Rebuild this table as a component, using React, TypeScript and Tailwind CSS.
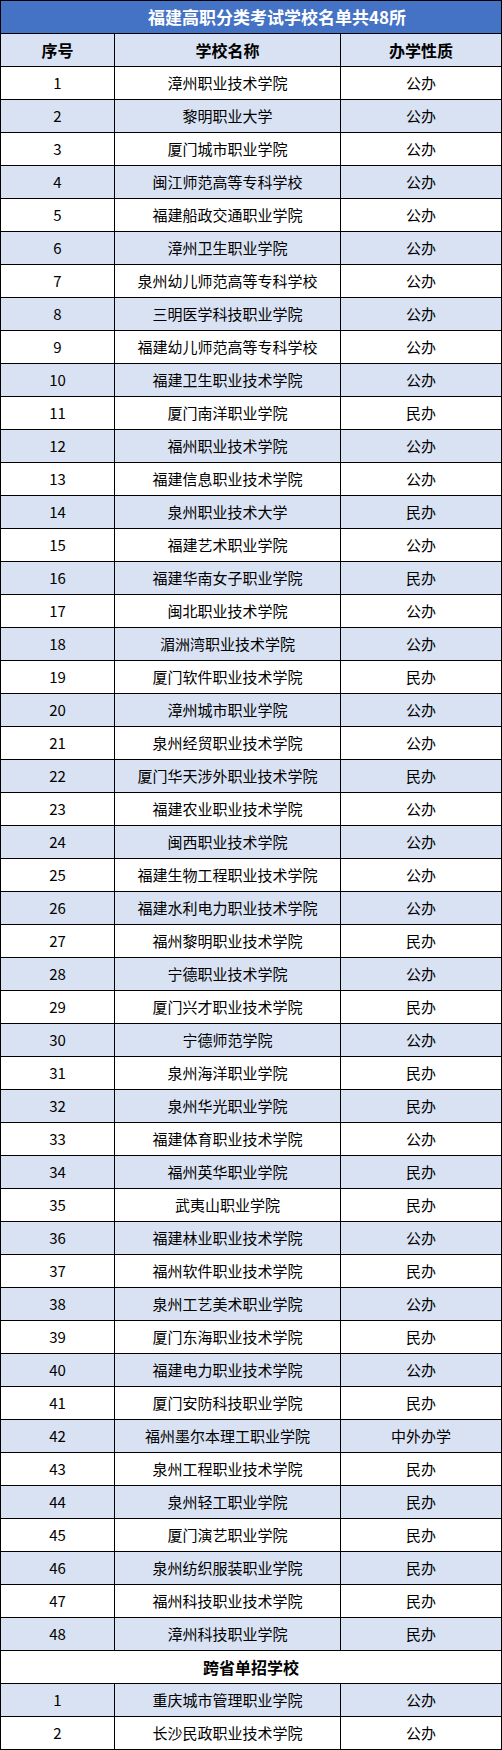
import React from "react";

const rows: [string, string][] = [
  ["漳州职业技术学院", "公办"],
  ["黎明职业大学", "公办"],
  ["厦门城市职业学院", "公办"],
  ["闽江师范高等专科学校", "公办"],
  ["福建船政交通职业学院", "公办"],
  ["漳州卫生职业学院", "公办"],
  ["泉州幼儿师范高等专科学校", "公办"],
  ["三明医学科技职业学院", "公办"],
  ["福建幼儿师范高等专科学校", "公办"],
  ["福建卫生职业技术学院", "公办"],
  ["厦门南洋职业学院", "民办"],
  ["福州职业技术学院", "公办"],
  ["福建信息职业技术学院", "公办"],
  ["泉州职业技术大学", "民办"],
  ["福建艺术职业学院", "公办"],
  ["福建华南女子职业学院", "民办"],
  ["闽北职业技术学院", "公办"],
  ["湄洲湾职业技术学院", "公办"],
  ["厦门软件职业技术学院", "民办"],
  ["漳州城市职业学院", "公办"],
  ["泉州经贸职业技术学院", "公办"],
  ["厦门华天涉外职业技术学院", "民办"],
  ["福建农业职业技术学院", "公办"],
  ["闽西职业技术学院", "公办"],
  ["福建生物工程职业技术学院", "公办"],
  ["福建水利电力职业技术学院", "公办"],
  ["福州黎明职业技术学院", "民办"],
  ["宁德职业技术学院", "公办"],
  ["厦门兴才职业技术学院", "民办"],
  ["宁德师范学院", "公办"],
  ["泉州海洋职业学院", "民办"],
  ["泉州华光职业学院", "民办"],
  ["福建体育职业技术学院", "公办"],
  ["福州英华职业学院", "民办"],
  ["武夷山职业学院", "民办"],
  ["福建林业职业技术学院", "公办"],
  ["福州软件职业技术学院", "民办"],
  ["泉州工艺美术职业学院", "公办"],
  ["厦门东海职业技术学院", "民办"],
  ["福建电力职业技术学院", "公办"],
  ["厦门安防科技职业学院", "民办"],
  ["福州墨尔本理工职业学院", "中外办学"],
  ["泉州工程职业技术学院", "民办"],
  ["泉州轻工职业学院", "民办"],
  ["厦门演艺职业学院", "民办"],
  ["泉州纺织服装职业学院", "民办"],
  ["福州科技职业技术学院", "民办"],
  ["漳州科技职业学院", "民办"],
];

const extra: [string, string][] = [
  ["重庆城市管理职业学院", "公办"],
  ["长沙民政职业技术学院", "公办"],
];

function Row({ n, name, kind, blue }: { n: number; name: string; kind: string; blue: boolean }) {
  return (
    <div className={`flex h-[33px] text-[15px] text-black ${blue ? "bg-[#D9E2F3]" : "bg-white"}`}>
      <div className="w-[114px] border-r border-b border-black flex items-center justify-center">{n}</div>
      <div className="w-[226px] border-r border-b border-black flex items-center justify-center">{name}</div>
      <div className="w-[161px] border-r border-b border-black flex items-center justify-center">{kind}</div>
    </div>
  );
}

export default function App() {
  return (
    <div
      className="w-[502px] bg-white border-l border-t border-black"
      style={{ fontFamily: '"Noto Sans CJK SC", "Noto Sans", sans-serif' }}
    >
      <div className="h-[33px] bg-[#4472C4] border-r border-b border-black flex items-center justify-center pl-[52px] text-white font-bold text-[17px]">
        福建高职分类考试学校名单共48所
      </div>
      <div className="flex h-[33px] bg-[#D9E2F3] font-bold text-[16px] text-black">
        <div className="w-[114px] border-r border-b border-black flex items-center justify-center">序号</div>
        <div className="w-[226px] border-r border-b border-black flex items-center justify-center">学校名称</div>
        <div className="w-[161px] border-r border-b border-black flex items-center justify-center">办学性质</div>
      </div>
      {rows.map(([name, kind], i) => (
        <Row key={i} n={i + 1} name={name} kind={kind} blue={i % 2 === 1} />
      ))}
      <div className="h-[33px] bg-white border-r border-b border-black flex items-center justify-center font-bold text-[16px] text-black">
        跨省单招学校
      </div>
      {extra.map(([name, kind], i) => (
        <Row key={i} n={i + 1} name={name} kind={kind} blue={i % 2 === 0} />
      ))}
    </div>
  );
}
